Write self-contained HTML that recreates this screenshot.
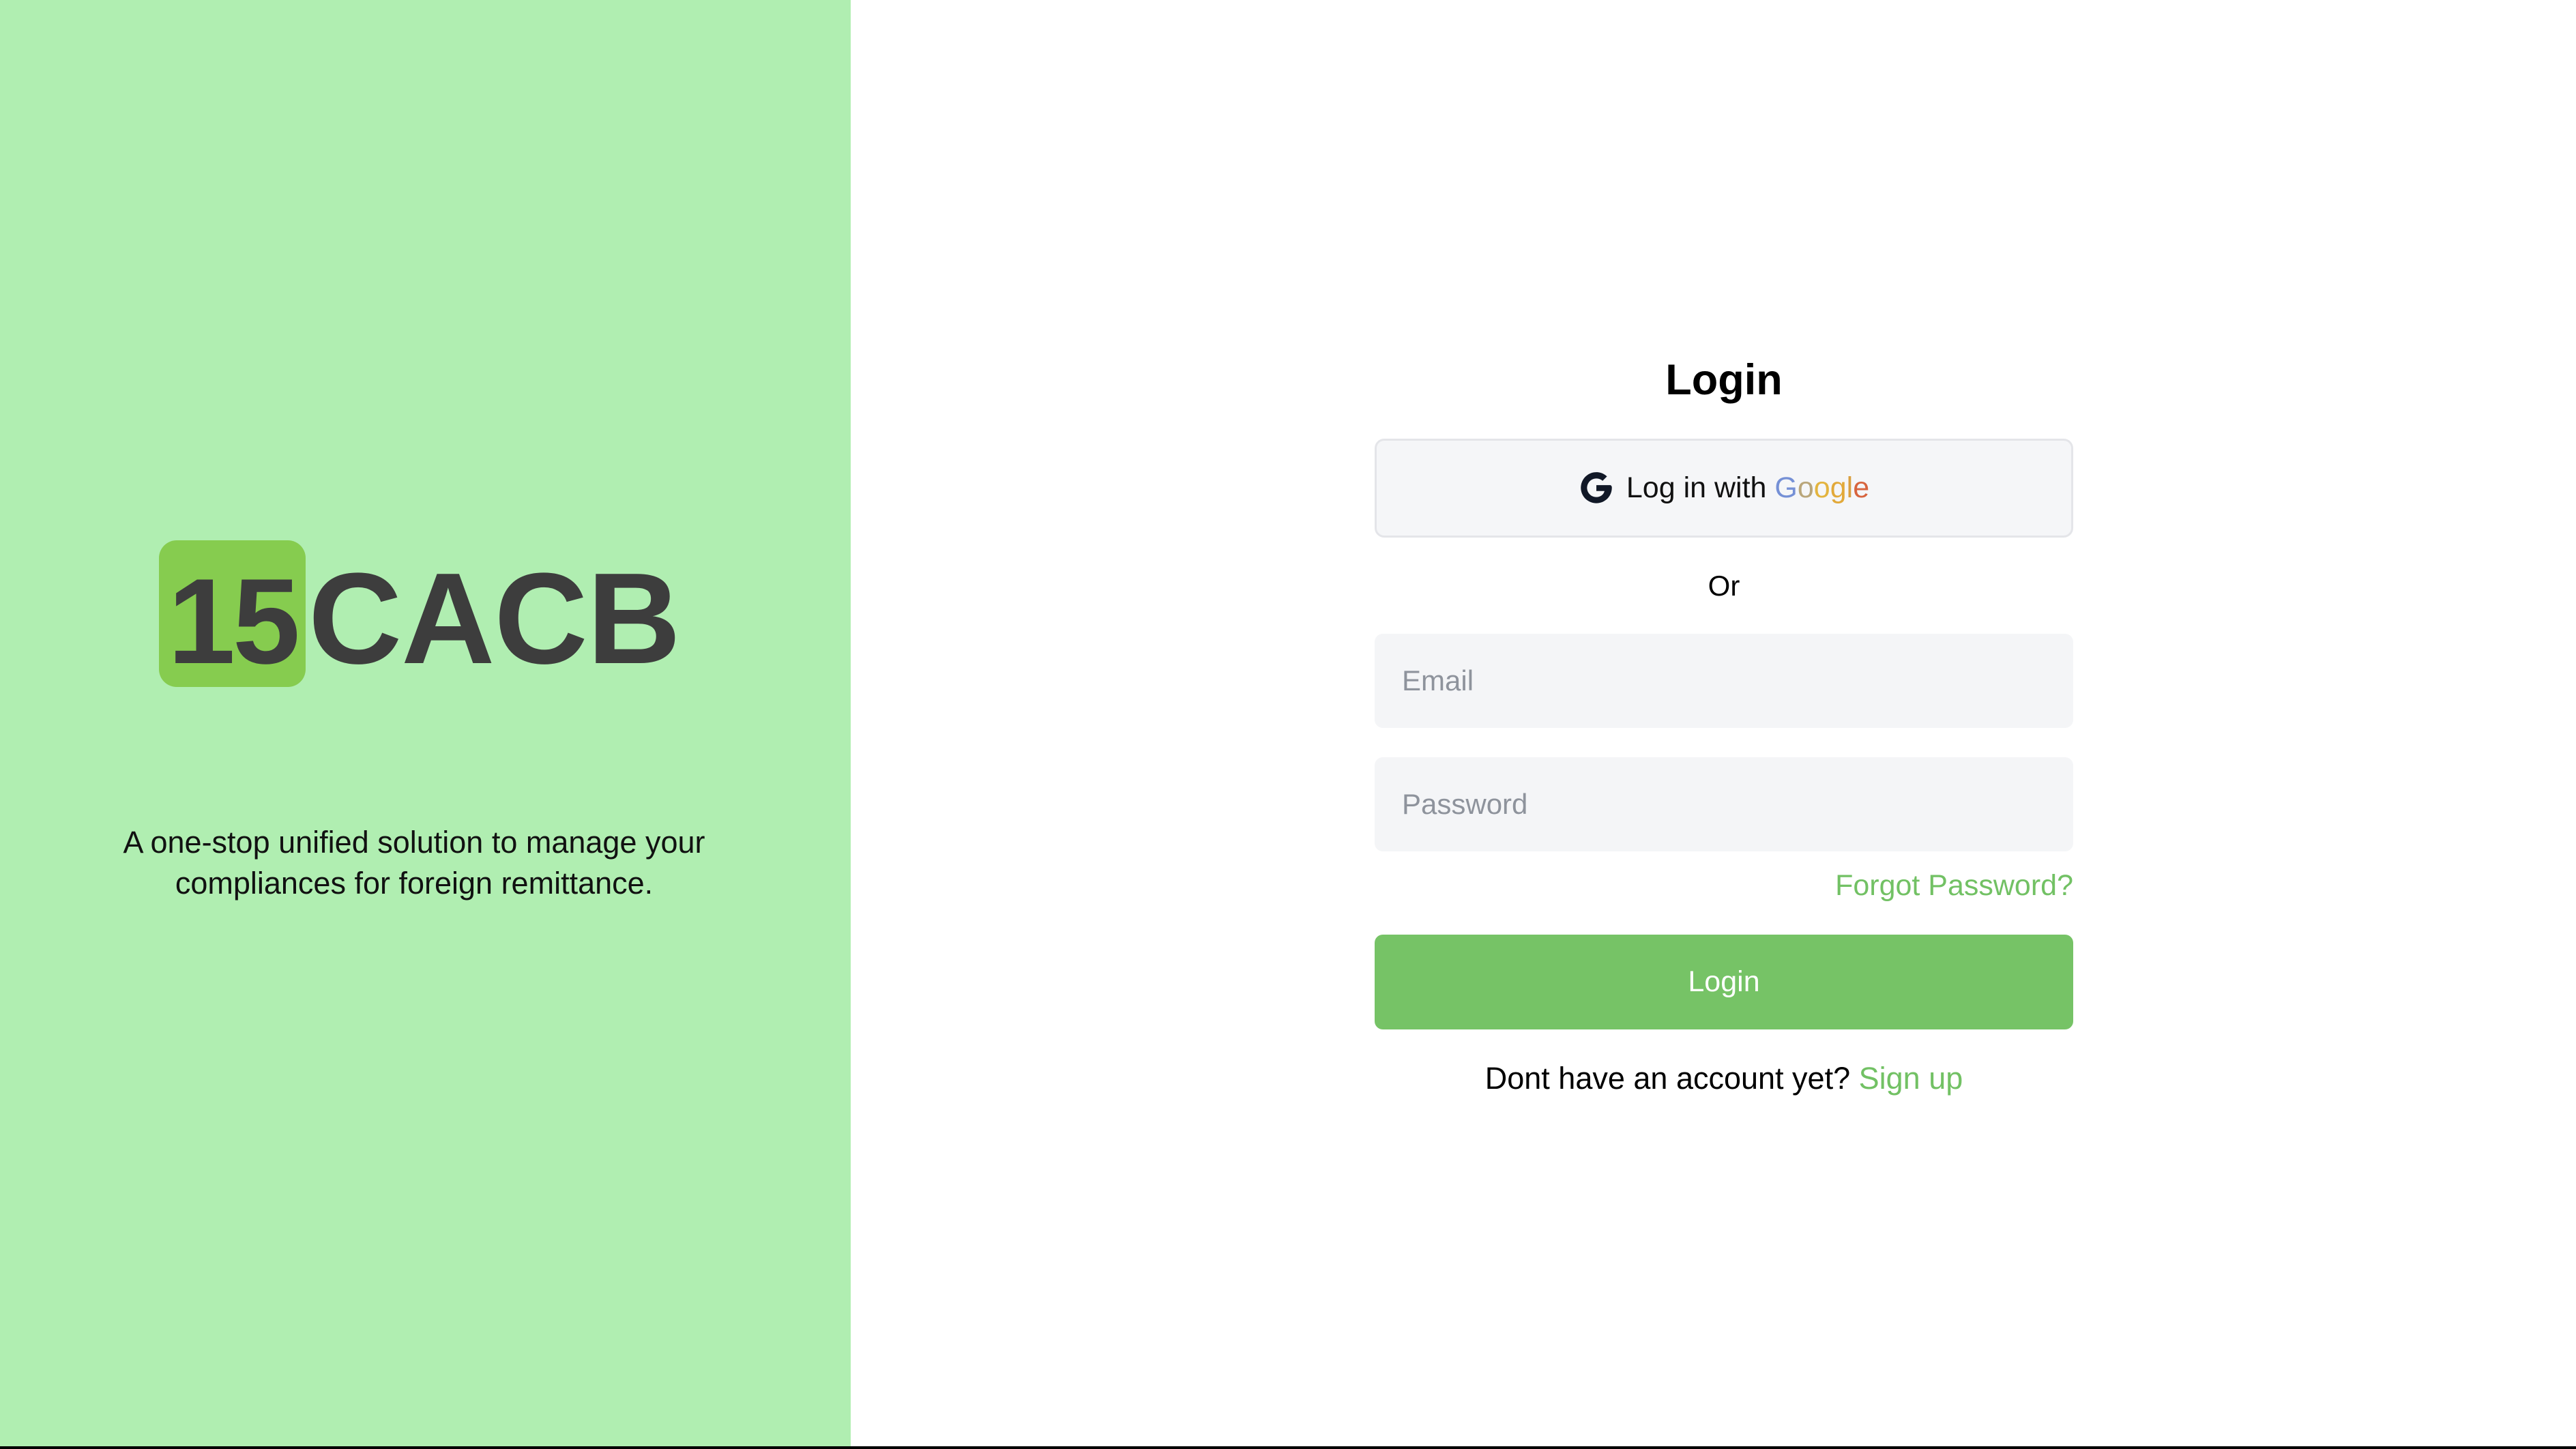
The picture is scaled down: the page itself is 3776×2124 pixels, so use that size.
<!DOCTYPE html>
<html><head><meta charset="utf-8"><style>
*{margin:0;padding:0;box-sizing:border-box}
body{width:3776px;height:2124px;position:relative;background:#fff;font-family:"Liberation Sans",sans-serif;overflow:hidden}
.left{position:absolute;left:0;top:0;width:1247px;height:2120px;background:#b0eeb1}
.bar{position:absolute;left:0;top:2120px;width:3776px;height:4px;background:#000}
.box{position:absolute;left:233px;top:792px;width:215px;height:215px;background:#86cc4f;border-radius:26px}
.logo{position:absolute;font-weight:bold;color:#3d3d3d;font-size:190px;line-height:1}
.tag{position:absolute;left:60px;width:1094px;top:1205px;text-align:center;font-size:45px;line-height:60px;color:#111}
.c{position:absolute;left:2015px;width:1024px;text-align:center}
.field{position:absolute;left:2015px;width:1024px;background:#f4f5f7;border-radius:12px;font-size:42px;color:#8e939c;padding-left:40px}
</style></head><body>
<div class="left"></div>
<div class="box"></div>
<div class="logo" style="left:246px;top:822px;font-size:178px;letter-spacing:-4px">15</div>
<div class="logo" style="left:452px;top:812px;font-size:190px;letter-spacing:-1px">CACB</div>
<div class="tag">A one-stop unified solution to manage your<br>compliances for foreign remittance.</div>

<div class="c" style="top:521px;font-size:63px;font-weight:bold;color:#000">Login</div>
<div style="position:absolute;left:2015px;top:643px;width:1024px;height:145px;background:#f5f6f8;border:3px solid #e4e5e9;border-radius:14px;text-align:center;line-height:139px;font-size:43px;color:#111">
<svg width="52" height="52" viewBox="0 0 24 24" style="vertical-align:-12px;margin-right:18px"><path d="M21.6 10.2H12v4h5.5c-.6 2.6-2.8 4.1-5.5 4.1a6.3 6.3 0 1 1 4.2-11l3-3A10.5 10.5 0 1 0 22.5 12c0-.6 0-1.2-.9-1.8z" fill="#111827"/></svg>Log in with <span style="color:#7590d6">G</span><span style="color:#b9a67a">o</span><span style="color:#e3b43f">o</span><span style="color:#e2a93a">g</span><span style="color:#d9a040">l</span><span style="color:#d7643e">e</span></div>
<div class="c" style="top:835px;font-size:42px;color:#000">Or</div>
<div class="field" style="top:929px;height:138px;line-height:138px">Email</div>
<div class="field" style="top:1110px;height:138px;line-height:138px">Password</div>
<div style="position:absolute;left:2015px;width:1024px;top:1274px;text-align:right;font-size:43px;color:#72c164">Forgot Password?</div>
<div style="position:absolute;left:2015px;top:1370px;width:1024px;height:139px;background:#76c366;border-radius:12px;text-align:center;line-height:139px;font-size:43px;color:#fff">Login</div>
<div class="c" style="top:1555px;font-size:45px;color:#000">Dont have an account yet? <span style="color:#72c164">Sign up</span></div>
<div class="bar"></div>
</body></html>
